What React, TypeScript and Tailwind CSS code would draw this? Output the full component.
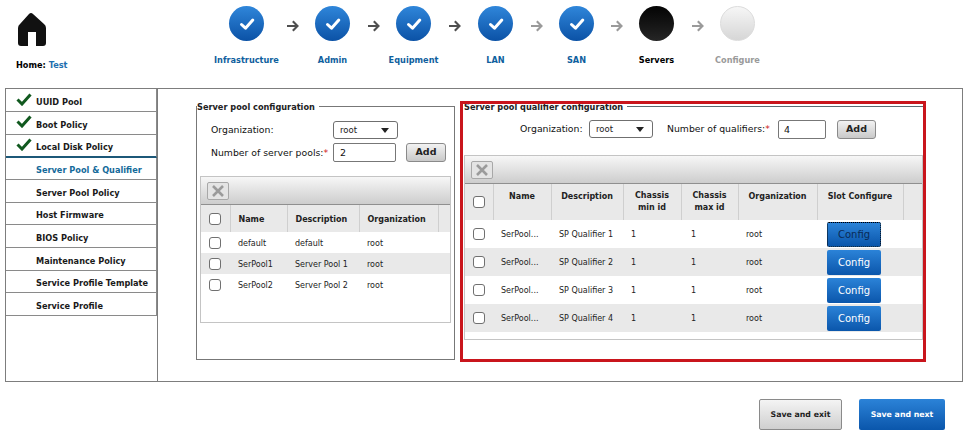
import React from "react";

const font = "font-['DejaVu_Sans',Verdana,sans-serif]";

function Check({ size = 20 }: { size?: number }) {
  return (
    <svg width={size} height={size} viewBox="0 0 20 20" fill="none">
      <path d="M4.5 10.5 L8.5 14.2 L15.8 6" stroke="#fff" strokeWidth="3" strokeLinecap="round" strokeLinejoin="round" />
    </svg>
  );
}

function Arrow({ color }: { color: string }) {
  return (
    <svg width="13" height="12" viewBox="0 0 13 12" fill="none">
      <path d="M1 6 H11 M6.8 1.2 L11.5 6 L6.8 10.8" stroke={color} strokeWidth="2.1" />
    </svg>
  );
}

const steps = [
  { label: "Infrastructure", kind: "done", arrow: "#4f4f4f", arrowCls: "w-[51px] pl-[5px]" },
  { label: "Admin", kind: "done", arrow: "#4f4f4f", arrowCls: "w-[46px]" },
  { label: "Equipment", kind: "done", arrow: "#4f4f4f", arrowCls: "w-[47px]" },
  { label: "LAN", kind: "done", arrow: "#9a9a9a", arrowCls: "w-[46px]" },
  { label: "SAN", kind: "done", arrow: "#9a9a9a", arrowCls: "w-[45px]" },
  { label: "Servers", kind: "current", arrow: "#9a9a9a", arrowCls: "w-[46px]" },
  { label: "Configure", kind: "todo", arrow: "", arrowCls: "" },
];

function Stepper() {
  return (
    <div className="flex items-start pt-[6px] pl-[229px]">
      {steps.map((s) => (
        <React.Fragment key={s.label}>
          <div className="flex w-[35px] flex-col items-center">
            {s.kind === "done" && (
              <div className="flex h-[35px] w-[35px] items-center justify-center rounded-full bg-gradient-to-b from-[#2f86da] to-[#0b52a6]">
                <Check />
              </div>
            )}
            {s.kind === "current" && (
              <div className="h-[35px] w-[35px] rounded-full bg-gradient-to-b from-[#050505] to-[#262626]" />
            )}
            {s.kind === "todo" && (
              <div className="h-[35px] w-[35px] rounded-full border border-[#dcdcdc] bg-gradient-to-b from-[#f6f6f6] to-[#d6d6d6]" />
            )}
            <div
              className={`mt-[13px] whitespace-nowrap text-[8.2px] font-bold leading-[12px] ${
                s.kind === "done" ? "text-[#0f5f9e]" : s.kind === "current" ? "text-black" : "text-[#9a9a9a]"
              }`}
            >
              {s.label}
            </div>
          </div>
          {s.arrow && (
            <div className={`flex h-[35px] items-center justify-center pt-[5px] ${s.arrowCls}`}>
              <Arrow color={s.arrow} />
            </div>
          )}
        </React.Fragment>
      ))}
    </div>
  );
}

const navItems = [
  { label: "UUID Pool", done: true, checkCls: "pb-[1px]", cls: "h-[23px] border-b border-[#8a8a8a]" },
  { label: "Boot Policy", done: true, checkCls: "pb-[3px]", cls: "h-[23px] border-b border-[#8a8a8a]" },
  { label: "Local Disk Policy", done: true, checkCls: "pb-[3px]", cls: "h-[23px] border-b-[2px] border-[#1c5878]" },
  { label: "Server Pool & Qualifier", active: true, cls: "h-[22px] border-b border-[#8a8a8a]" },
  { label: "Server Pool Policy", cls: "h-[23px] border-b border-[#8a8a8a]" },
  { label: "Host Firmware", cls: "h-[22px] border-b border-[#8a8a8a]" },
  { label: "BIOS Policy", cls: "h-[23px] border-b border-[#8a8a8a]" },
  { label: "Maintenance Policy", cls: "h-[23px] border-b border-[#8a8a8a]" },
  { label: "Service Profile Template", cls: "h-[22px] border-b border-[#8a8a8a]" },
  { label: "Service Profile", cls: "h-[23px] border-b border-[#8a8a8a]" },
];

function Nav() {
  return (
    <div className="w-[152px] shrink-0 border-y border-l border-[#7d7d7d]">
      {navItems.map((n) => (
        <div key={n.label} className={`flex items-center border-r border-r-[#8a8a8a] ${n.cls}`}>
          <div className={`flex w-[30px] shrink-0 justify-end pr-[4px] ${n.checkCls ?? ""}`}>
            {n.done && (
              <svg width="16" height="13" viewBox="0 0 16 13" fill="none">
                <path d="M1.5 6.5 L6 11 L14.5 1.5" stroke="#11591f" strokeWidth="3" />
              </svg>
            )}
          </div>
          <span
            className={`whitespace-nowrap pt-[4px] text-[8.2px] font-bold ${n.active ? "text-[#136a9a]" : "text-[#1a1a1a]"}`}
          >
            {n.label}
          </span>
        </div>
      ))}
    </div>
  );
}

function Select() {
  return (
    <div className="flex h-full w-full items-center justify-between rounded-[3px] border border-[#6f6f6f] bg-white pl-[6px] pr-[8px] text-[8.5px] text-[#222]">
      <span className="pt-[1px]">root</span>
      <span className="h-0 w-0 border-x-[4px] border-t-[5px] border-x-transparent border-t-[#222]" />
    </div>
  );
}

function AddButton({ cls }: { cls: string }) {
  return (
    <button className={`rounded-[3px] border border-[#8a8a8a] bg-gradient-to-b from-[#f2f2f2] to-[#c9c9c9] text-[9.5px] font-bold text-[#222] ${cls}`}>
      Add
    </button>
  );
}

function Toolbar({ cls }: { cls: string }) {
  return (
    <div className={`flex items-center border-b border-[#8f8f8f] bg-gradient-to-b from-[#f7f7f7] to-[#cdcdcd] pl-[6px] ${cls}`}>
      <div className="flex h-[18px] w-[22px] items-center justify-center rounded-[2px] border border-[#a8a8a8] bg-[#e4e4e4]">
        <svg width="14" height="14" viewBox="0 0 14 14" fill="none">
          <path d="M2 2 L12 12 M12 2 L2 12" stroke="#9b9b9b" strokeWidth="2.6" />
        </svg>
      </div>
    </div>
  );
}

function Box() {
  return (
    <input
      type="checkbox"
      readOnly
      className="block h-[12px] w-[12px] appearance-none rounded-[3px] border border-[#707070] bg-white"
    />
  );
}

const pools = [
  ["default", "default", "root"],
  ["SerPool1", "Server Pool 1", "root"],
  ["SerPool2", "Server Pool 2", "root"],
];

const qualifiers = [1, 2, 3, 4];

function PoolFieldset() {
  return (
    <fieldset className="h-[260px] w-[259px] shrink-0 border border-[#777] px-[3px]">
      <legend className="-ml-[3px] pr-[4px] pt-[1px] text-[8.2px] font-bold leading-[12px] text-[#222]">Server pool configuration</legend>
      <div className="grid grid-cols-[122px_73px_40px] items-center gap-y-[4px] pl-[11px] pt-[8px] text-[9.3px] text-[#111]">
        <span>Organization:</span>
        <div className="h-[18px] w-[65px]"><Select /></div>
        <span />
        <span className="whitespace-nowrap pt-[1px]">
          Number of server pools:<span className="text-[#d01818]">*</span>
        </span>
        <input readOnly value="2" className="h-[19px] w-[63px] rounded-[2px] border border-[#777] pl-[6px] text-[9.5px]" />
        <AddButton cls="h-[19px] w-[40px]" />
      </div>
      <div className="mt-[14px] h-[147px] border border-[#c4c4c4]">
        <Toolbar cls="h-[28px]" />
        <table className="w-full table-fixed border-collapse text-[8px] text-[#222]">
          <colgroup>
            <col className="w-[29px]" />
            <col className="w-[57px]" />
            <col className="w-[72px]" />
            <col className="w-[79px]" />
            <col />
          </colgroup>
          <thead>
            <tr className="h-[27px] bg-[#e9e9e9] font-bold">
              <th className="border-r border-[#cfcfcf] pl-[8px]"><Box /></th>
              <th className="border-r border-[#cfcfcf] pl-[8px] pt-[3px] text-left">Name</th>
              <th className="border-r border-[#cfcfcf] pl-[8px] pt-[3px] text-left">Description</th>
              <th className="border-r border-[#cfcfcf] pl-[8px] pt-[3px] text-left">Organization</th>
              <th />
            </tr>
          </thead>
          <tbody>
            {pools.map((p, i) => (
              <tr key={p[0]} className={`h-[21px] ${i === 1 ? "bg-[#e9e9e9]" : ""}`}>
                <td className="pl-[8px]"><Box /></td>
                <td className="pl-[8px] pt-[2px]">{p[0]}</td>
                <td className="pl-[8px] pt-[2px]">{p[1]}</td>
                <td className="pl-[8px] pt-[2px]">{p[2]}</td>
                <td />
              </tr>
            ))}
          </tbody>
        </table>
      </div>
    </fieldset>
  );
}

function QualifierFieldset() {
  return (
    <div className="relative ml-[9px] w-[459px] shrink-0">
      <fieldset className="border-t border-[#5b6b72]">
        <legend className="pr-[4px] pt-[1px] text-[8.2px] font-bold leading-[12px] text-[#222]">Server pool qualifier configuration</legend>
        <div className="flex h-[42px] items-start pl-[56px] pt-[7px] text-[9.3px] text-[#111]">
          <span className="w-[69px] pt-[2px]">Organization:</span>
          <div className="h-[18px] w-[64px]"><Select /></div>
          <span className="ml-[14px] w-[111px] whitespace-nowrap pt-[2px]">
            Number of qualifiers:<span className="text-[#d01818]">*</span>
          </span>
          <input readOnly value="4" className="h-[19px] w-[48px] rounded-[2px] border border-[#777] pl-[5px] text-[9.5px]" />
          <AddButton cls="ml-[11px] h-[19px] w-[39px]" />
        </div>
        <div className="h-[185px] border border-[#c4c4c4]">
          <Toolbar cls="h-[28px]" />
          <table className="w-full table-fixed border-collapse text-[8px] text-[#222]">
            <colgroup>
              <col className="w-[28px]" />
              <col className="w-[58px]" />
              <col className="w-[72px]" />
              <col className="w-[58px]" />
              <col className="w-[57px]" />
              <col className="w-[79px]" />
              <col className="w-[86px]" />
              <col />
            </colgroup>
            <thead>
              <tr className="h-[36px] bg-[#e9e9e9] font-bold leading-[12px]">
                <th className="border-r border-[#cfcfcf] pl-[8px]"><Box /></th>
                <th className="border-r border-[#cfcfcf] pb-[10px]">Name</th>
                <th className="border-r border-[#cfcfcf] pb-[10px]">Description</th>
                <th className="border-r border-[#cfcfcf]">Chassis<br />min id</th>
                <th className="border-r border-[#cfcfcf]">Chassis<br />max id</th>
                <th className="border-r border-[#cfcfcf] pb-[10px]">Organization</th>
                <th className="border-r border-[#cfcfcf] pb-[10px]">Slot Configure</th>
                <th />
              </tr>
            </thead>
            <tbody>
              {qualifiers.map((q) => (
                <tr key={q} className={`h-[28px] ${q % 2 === 0 ? "bg-[#e9e9e9]" : ""}`}>
                  <td className="pl-[8px]"><Box /></td>
                  <td className="pl-[8px] pt-[2px]">SerPool...</td>
                  <td className="pl-[8px] pt-[2px]">SP Qualifier {q}</td>
                  <td className="pl-[8px] pt-[2px]">1</td>
                  <td className="pl-[10px] pt-[2px]">1</td>
                  <td className="pl-[8px] pt-[2px]">root</td>
                  <td className="pl-[10px]">
                    <button
                      className={`block h-[25px] w-[54px] rounded-[2px] bg-gradient-to-b from-[#2b83d8] to-[#0a56ab] text-[10px] ${
                        q === 1 ? "border border-dotted border-black text-[#0a2a55]" : "text-white"
                      }`}
                    >
                      Config
                    </button>
                  </td>
                  <td />
                </tr>
              ))}
            </tbody>
          </table>
        </div>
      </fieldset>
      <div className="pointer-events-none absolute left-[-4px] right-[-3px] top-[1px] h-[261px] border-[3px] border-[#c9151c]" />
    </div>
  );
}

export default function App() {
  return (
    <div className={`h-[432px] w-[969px] overflow-hidden bg-white ${font}`}>
      <header className="relative h-[88px]">
        <div className="absolute left-[16px] top-[12px]">
          <svg width="30" height="34" viewBox="0 0 30 34" fill="none">
            <path
              fillRule="evenodd"
              d="M15 1 Q16 1 17 2 L28 12 Q30 13.5 30 16 V31 Q30 34 27 34 H20 V20 H12 V34 H5 Q2 34 2 31 V16 Q2 13.5 4 12 L13 2 Q14 1 15 1 Z"
              fill="#111"
            />
          </svg>
        </div>
        <div className="absolute left-[16px] top-[59px] text-[8.2px] font-bold leading-[12px] text-black">
          Home: <span className="text-[#1f6fb0]">Test</span>
        </div>
        <Stepper />
      </header>
      <div className="ml-[5px] flex h-[294px] w-[958px]">
        <Nav />
        <main className="flex flex-1 items-start border border-[#7d7d7d] pl-[38px] pt-[11px]">
          <PoolFieldset />
          <QualifierFieldset />
        </main>
      </div>
      <footer className="flex justify-end gap-[17px] pr-[24px] pt-[17px] text-[7.8px] font-bold">
        <button className="h-[31px] w-[83px] rounded-[2px] border border-[#8a8a8a] bg-gradient-to-b from-[#f4f4f4] to-[#cfcfcf] text-[#222]">
          Save and exit
        </button>
        <button className="h-[31px] w-[86px] rounded-[2px] bg-gradient-to-b from-[#2b83d8] to-[#0a56ab] text-white">
          Save and next
        </button>
      </footer>
    </div>
  );
}
